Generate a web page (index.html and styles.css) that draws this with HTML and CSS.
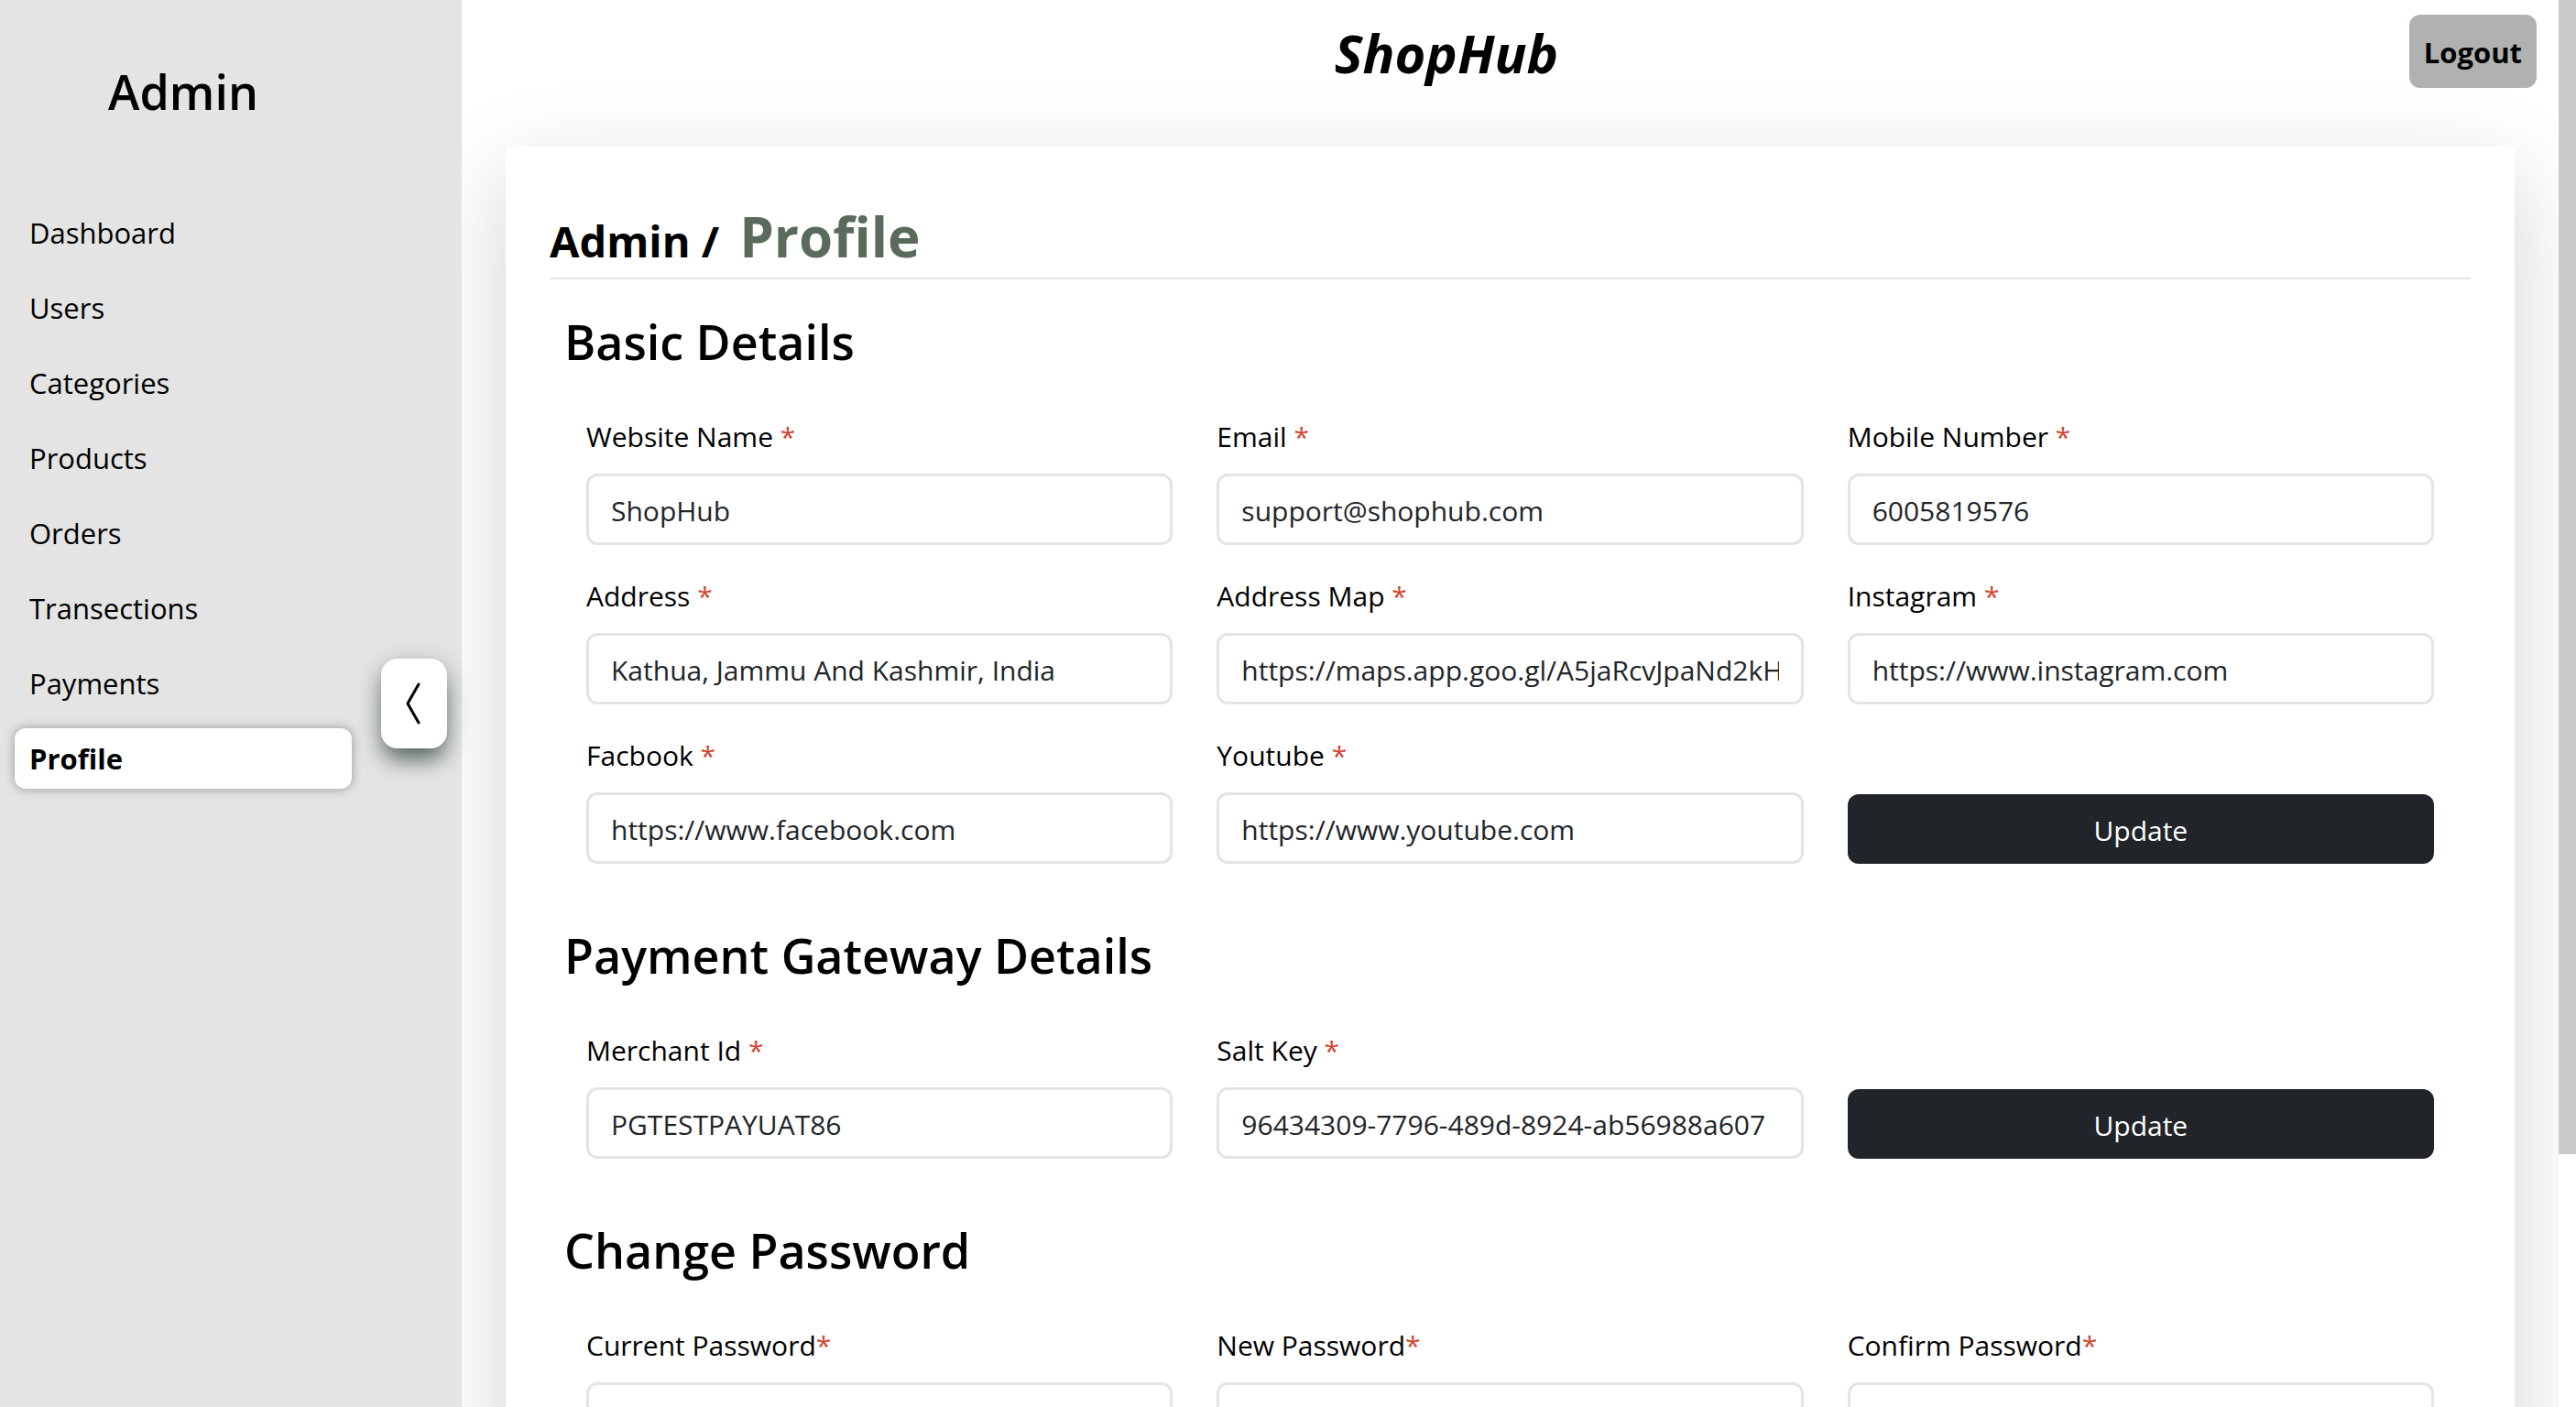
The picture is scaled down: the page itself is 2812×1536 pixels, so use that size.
FILE: index.html
```html
<!DOCTYPE html>
<html lang="en">
<head>
<meta charset="utf-8">
<title>ShopHub Admin - Profile</title>
<link rel="stylesheet" href="styles.css">
</head>
<body>
<aside class="sidebar">
  <h2 class="sidebar-title">Admin</h2>
  <nav class="nav">
    <a class="nav-link" href="#">Dashboard</a>
    <a class="nav-link" href="#">Users</a>
    <a class="nav-link" href="#">Categories</a>
    <a class="nav-link" href="#">Products</a>
    <a class="nav-link" href="#">Orders</a>
    <a class="nav-link" href="#">Transections</a>
    <a class="nav-link" href="#">Payments</a>
    <a class="nav-link active" href="#" aria-current="page">Profile</a>
  </nav>
  <button class="toggle" type="button" aria-label="Collapse sidebar">
    <svg width="20" height="50" viewBox="0 0 20 50" fill="none" stroke="#000" stroke-width="3" stroke-linecap="round" stroke-linejoin="round"><path d="M15 4 3 25l12 21"/></svg>
  </button>
</aside>
<main class="main">
  <header class="topbar">
    <h1 class="brand">ShopHub</h1>
    <button class="logout" type="button">Logout</button>
  </header>
  <div class="card">
    <div class="crumbs"><span>Admin /</span><span class="crumb-current">Profile</span></div>
    <form class="section">
      <h2 class="section-title">Basic Details</h2>
      <div class="fields">
        <div class="field"><label for="site">Website Name <i>*</i></label><input id="site" type="text" value="ShopHub"></div>
        <div class="field"><label for="email">Email <i>*</i></label><input id="email" type="email" value="support@shophub.com"></div>
        <div class="field"><label for="mobile">Mobile Number <i>*</i></label><input id="mobile" type="text" value="6005819576"></div>
        <div class="field"><label for="address">Address <i>*</i></label><input id="address" type="text" value="Kathua, Jammu And Kashmir, India"></div>
        <div class="field"><label for="map">Address Map <i>*</i></label><input id="map" type="text" value="https://maps.app.goo.gl/A5jaRcvJpaNd2kHk8"></div>
        <div class="field"><label for="instagram">Instagram <i>*</i></label><input id="instagram" type="text" value="https://www.instagram.com"></div>
        <div class="field"><label for="facebook">Facbook <i>*</i></label><input id="facebook" type="text" value="https://www.facebook.com"></div>
        <div class="field"><label for="youtube">Youtube <i>*</i></label><input id="youtube" type="text" value="https://www.youtube.com"></div>
        <button class="update" type="button">Update</button>
      </div>
    </form>
    <form class="section">
      <h2 class="section-title">Payment Gateway Details</h2>
      <div class="fields">
        <div class="field"><label for="merchant">Merchant Id <i>*</i></label><input id="merchant" type="text" value="PGTESTPAYUAT86"></div>
        <div class="field"><label for="salt">Salt Key <i>*</i></label><input id="salt" type="text" value="96434309-7796-489d-8924-ab56988a607"></div>
        <button class="update" type="button">Update</button>
      </div>
    </form>
    <form class="section">
      <h2 class="section-title">Change Password</h2>
      <div class="fields">
        <div class="field"><label for="current">Current Password<i>*</i></label><input id="current" type="password"></div>
        <div class="field"><label for="new">New Password<i>*</i></label><input id="new" type="password"></div>
        <div class="field"><label for="confirm">Confirm Password<i>*</i></label><input id="confirm" type="password"></div>
      </div>
    </form>
  </div>
</main>
<div class="scroll-track"><div class="scroll-thumb"></div></div>
</body>
</html>
```
FILE: styles.css
```css
* {
  box-sizing: border-box;
}

body {
  margin: 0;
  height: 100vh;
  display: flex;
  overflow: hidden;
  background: #fff;
  color: #000;
  font: 31px/48px "Segoe UI", "Open Sans", "Noto Sans", sans-serif;
}

h1,
h2 {
  margin: 0;
}

button,
input {
  font: inherit;
}

.sidebar {
  position: relative;
  z-index: 1;
  flex: 0 0 504px;
  padding: 68px 104px 0 16px;
  background: #e4e4e4;
}

.sidebar-title {
  padding-right: 16px;
  font-size: 52px;
  font-weight: 600;
  line-height: 64px;
  text-align: center;
}

.nav {
  margin-top: 89px;
  padding-right: 16px;
  display: flex;
  flex-direction: column;
  gap: 16px;
}

.nav-link {
  padding: 9px 16px;
  border-radius: 12px;
  color: #000;
  text-decoration: none;
}

.nav-link.active {
  background: #fff;
  font-weight: 700;
  box-shadow: 0 0 12px rgba(0, 0, 0, 0.35);
}

.toggle {
  position: absolute;
  top: 50%;
  right: 16px;
  width: 72px;
  height: 98px;
  display: flex;
  align-items: center;
  justify-content: center;
  padding: 0;
  border: 0;
  border-radius: 18px;
  background: #fff;
  transform: translateY(-50%);
  box-shadow: 0 16px 24px -4px rgba(20, 40, 30, 0.6), 0 4px 24px rgba(40, 60, 50, 0.25);
}

.main {
  flex: 1;
  min-width: 0;
  overflow: hidden;
}

.topbar {
  display: flex;
  align-items: center;
  padding: 16px 24px 0;
}

.brand {
  flex: 1;
  padding-top: 4px;
  font-size: 58px;
  font-weight: 700;
  font-style: italic;
  line-height: 64px;
  text-align: center;
}

.logout {
  position: relative;
  z-index: 1;
  height: 80px;
  padding: 2px 16px 0;
  border: 0;
  border-radius: 12px;
  background: #b0b2b1;
  color: #000;
  font-weight: 700;
}

.card {
  min-height: 100vh;
  margin: 64px 48px 0;
  padding: 58px 48px;
  background: #fff;
  box-shadow: 0 32px 96px rgba(0, 0, 0, 0.175);
}

.crumbs {
  display: flex;
  align-items: baseline;
  gap: 22px;
  border-bottom: 2px solid #e5e5e5;
  font-size: 47px;
  font-weight: 700;
  line-height: 80px;
}

.crumb-current {
  color: #5a6b5b;
  font-size: 60px;
}

.section {
  padding: 36px 40px 32px;
}

.section-title {
  margin: 0 -24px 48px;
  font-size: 52px;
  font-weight: 600;
  line-height: 64px;
}

.fields {
  display: grid;
  grid-template-columns: repeat(3, 1fr);
  align-items: end;
  gap: 32px 48px;
  font-size: 30px;
}

.field {
  min-width: 0;
  display: flex;
  flex-direction: column;
  gap: 16px;
}

.field i {
  color: #d2432f;
  font-style: normal;
}

.field input {
  width: 100%;
  height: 78px;
  padding: 2px 24px 0;
  border: 3px solid #e4e4e4;
  border-radius: 12px;
  background: #fff;
  color: #212529;
}

.update {
  height: 76px;
  padding: 4px 24px 0;
  border: 0;
  border-radius: 12px;
  background: #212529;
  color: #fff;
}

.scroll-track {
  flex: 0 0 19px;
  position: relative;
  z-index: 1;
  background: #fff;
}

.scroll-thumb {
  height: 82%;
  background: #cacaca;
}
```
